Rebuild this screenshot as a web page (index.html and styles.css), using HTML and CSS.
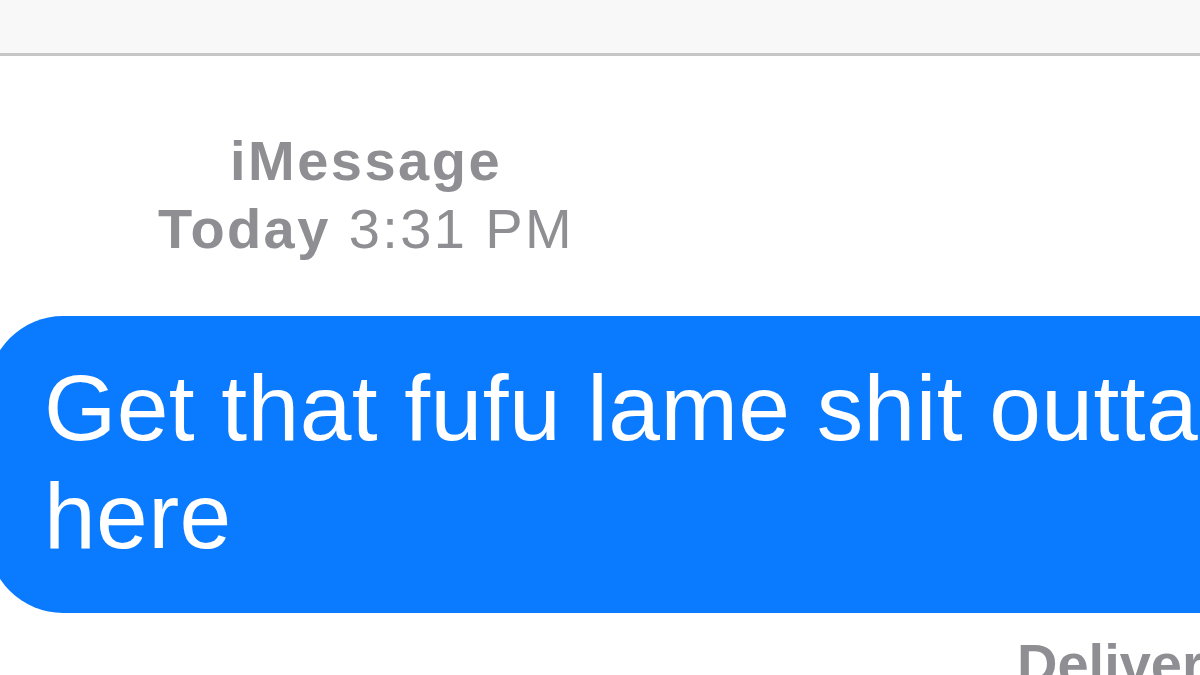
FILE: index.html
```html
<!DOCTYPE html>
<html>
<head>
<meta charset="utf-8">
<link rel="stylesheet" href="styles.css">
</head>
<body>
<div class="screen">
  <header class="navbar"></header>
  <main class="thread">
    <div class="meta">
      <div class="service">iMessage</div>
      <div class="stamp"><b>Today</b> 3:31 PM</div>
    </div>
    <div class="bubble-row">
      <div class="bubble"><p class="bubble-text">Get that fufu lame shit outta here</p></div>
    </div>
    <div class="status">Delivered</div>
  </main>
</div>
</body>
</html>
```

FILE: styles.css
```css
html, body {
  margin: 0;
  padding: 0;
  background: #ffffff;
}
body {
  width: 1200px;
  height: 675px;
  overflow: hidden;
  font-family: "Liberation Sans", Arial, sans-serif;
}
.screen {
  width: 1200px;
  height: 675px;
  overflow: hidden;
  display: flex;
  flex-direction: column;
}
.navbar {
  height: 53px;
  flex: none;
  background: #f8f8f8;
  border-bottom: 3px solid #c6c6c6;
}
.thread {
  display: flex;
  flex-direction: column;
}
.meta {
  width: 732px;
  margin-top: 71px;
  text-align: center;
  color: #8e8e93;
  font-size: 56px;
  line-height: 68px;
}
.service {
  font-weight: 700;
  letter-spacing: 2.5px;
}
.stamp {
  letter-spacing: 2.4px;
}
.stamp b {
  font-weight: 700;
}
.bubble-row {
  margin-top: 53px;
  display: flex;
}
.bubble {
  flex: none;
  margin-left: -12px;
  width: 1240px;
  padding: 38px 0 43px 56px;
  background: #0a7aff;
  border-radius: 75px;
  color: #ffffff;
}
.bubble-text {
  margin: 0;
  width: 1200px;
  font-size: 93px;
  line-height: 108px;
  letter-spacing: 0.4px;
}
.status {
  margin-top: 17px;
  margin-left: 1017px;
  white-space: nowrap;
  color: #8e8e93;
  font-size: 56px;
  line-height: 68px;
  font-weight: 700;
}
```
